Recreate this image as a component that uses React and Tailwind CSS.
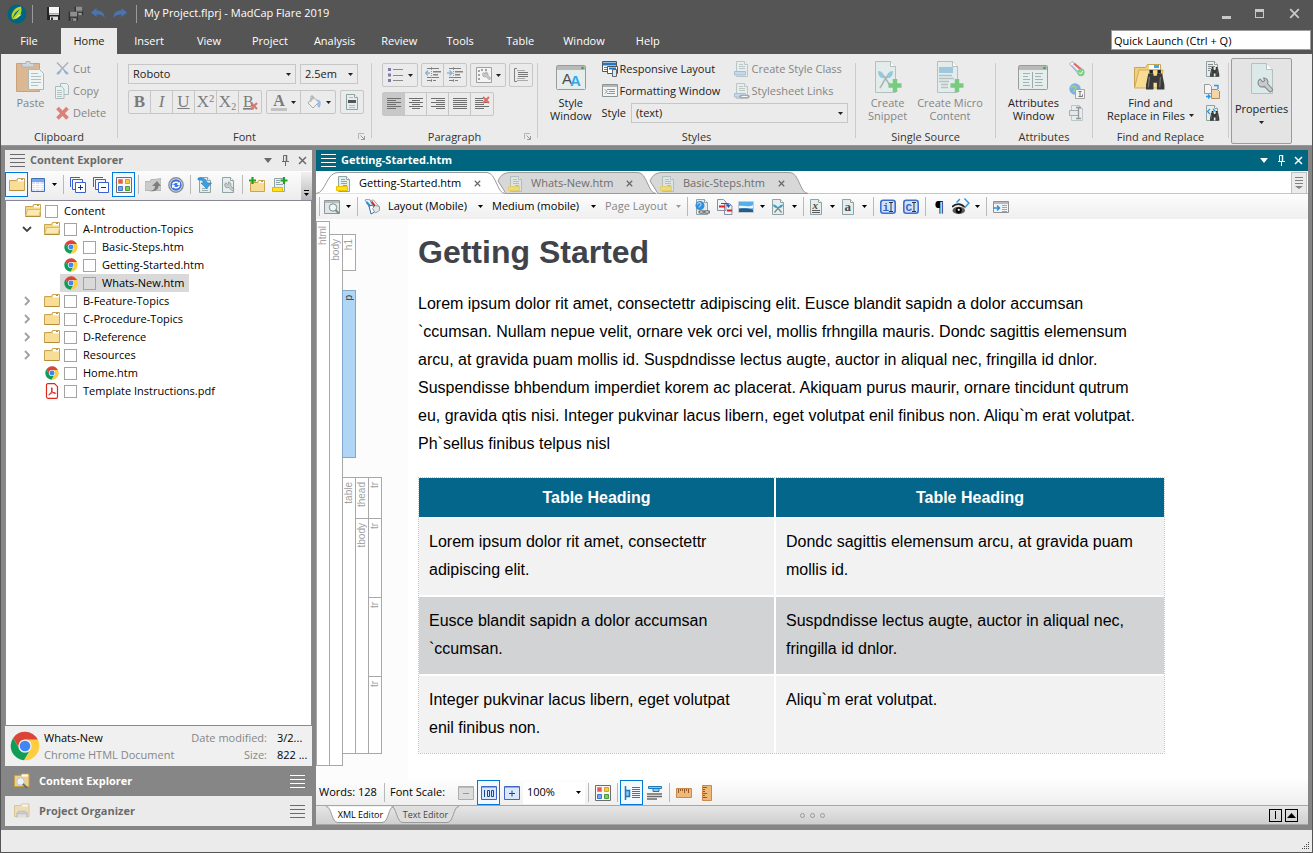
import clsx from 'clsx'

/* ---------- shared bits ---------- */

const Svg = ({ w = 16, h = 16, box = 16, faded, children }) => (
  <svg
    width={w}
    height={h}
    viewBox={`0 0 ${box} ${(box * h) / w}`}
    className={clsx('shrink-0', faded && 'opacity-50')}
    aria-hidden="true"
  >
    {children}
  </svg>
)

const Caret = ({ className = 'text-black' }) => (
  <svg width="5" height="3" viewBox="0 0 5 3" className={clsx('shrink-0', className)} aria-hidden="true">
    <path d="M0 0h5L2.5 3z" fill="currentColor" />
  </svg>
)

const Lines = ({ className = 'text-[#6a6a6a]' }) => (
  <svg width="15" height="13" viewBox="0 0 15 13" className={clsx('shrink-0', className)} aria-hidden="true">
    <path d="M0 .5h15M0 4.5h15M0 8.5h15M0 12.5h15" stroke="currentColor" />
  </svg>
)

const Sep = () => (
  <span className="flex w-1.5 shrink-0 justify-center">
    <span className="h-[19px] w-px bg-[#b9b9b9]" />
  </span>
)

const ToolButton = ({ label, active, narrow, children }) => (
  <button
    aria-label={label}
    className={clsx(
      'flex h-[25px] shrink-0 items-center justify-center',
      narrow ? 'w-5' : 'w-[23px]',
      active && 'border border-[#0078d7] bg-[#f3f9fe]'
    )}
  >
    {children}
  </button>
)

const DropButton = ({ label, className }) => (
  <button aria-label={label} className="flex h-[25px] w-3 shrink-0 items-center justify-center">
    <Caret className={className} />
  </button>
)

/* ---------- icons ---------- */

const PageShape = ({ fill = '#e4eeee' }) => (
  <>
    <path d="M2.500.5h8l3 3v12h-11z" fill={fill} stroke="#8fa3a6" />
    <path d="M10.500.5v3h3" fill="#fff" stroke="#8fa3a6" />
  </>
)

const Folder = ({ open }) => (
  <Svg>
    <path d="M.5 3.500h7l1-2h7v12H.5z" fill="#f4d88a" stroke="#c9a452" />
    <path d="M9 2h6v2.500H9z" fill="#fff" />
    <path d="M12 2h2v1h-2z" fill="#38b0e8" />
    {open ? (
      <path d="M2.500 6.500h13.200l-1.700 6.500H.8z" fill="#fbe9b4" stroke="#d9bb73" />
    ) : (
      <path d="M1 5h14v8H1z" fill="#f8dd97" />
    )}
    <path d="M.5 13.500h14.500" stroke="#b58d3a" />
  </Svg>
)

const Chrome = ({ size = 14 }) => (
  <Svg w={size} h={size} box={48}>
    <path d="M24 14h20.700A23 23 0 0 0 5 11.100L15.300 29A10 10 0 0 1 24 14z" fill="#db4437" />
    <path d="M32.700 29L22.300 46.900A23 23 0 0 0 44.700 14H24a10 10 0 0 1 8.700 15z" fill="#ffcd40" />
    <path d="M15.300 29L5 11.100a23 23 0 0 0 17.300 35.800L32.700 29a10 10 0 0 1-17.400 0z" fill="#0f9d58" />
    <circle cx="24" cy="24" r="10.500" fill="#f1f1f1" />
    <circle cx="24" cy="24" r="8.500" fill="#4285f4" />
  </Svg>
)

const Pdf = () => (
  <Svg>
    <path d="M4 .7h6.500l3 3V14a1.300 1.300 0 0 1-1.300 1.300H4A1.500 1.500 0 0 1 2.500 14V2A1.300 1.300 0 0 1 4 .7z" fill="#fff" stroke="#e0261b" strokeWidth="1.200" />
    <path d="M4.800 12.200c-.5-1 3-2.800 5.500-2.700 2 .2 1.500 1.500.2 1C8.500 9.800 7 7 7.500 5c.8-1 1 1 .2 3-.7 2-2 4.200-2.900 4.200z" fill="none" stroke="#e0261b" />
  </Svg>
)

const HtmlDoc = ({ faded }) => (
  <Svg faded={faded}>
    <PageShape />
    <path d="M5 3.500h4M5 5.500h6M5 7.500h6M7 9.500h4" stroke="#93a4a6" />
    <path d="M.5 10.500h11v4H.5z" fill="#ffe11c" stroke="#ecc500" />
  </Svg>
)

const Swatches = () => (
  <Svg>
    <path d="M.5.5h15v15H.5z" fill="#f7f7f7" stroke="#6d6d6d" />
    <path d="M2.500 2.500h4v4h-4z" fill="#e9574f" stroke="#e98a6a" />
    <path d="M9.500 2.500h4v4h-4z" fill="#ffc83c" stroke="#dd9f1f" />
    <path d="M2.500 9.500h4v4h-4z" fill="#6fa9ef" stroke="#3c78c7" />
    <path d="M9.500 9.500h4v4h-4z" fill="#7ac96b" stroke="#4b9b3d" />
  </Svg>
)

const GridView = () => (
  <Svg>
    <path d="M1.500 1.500h13v13h-13z" fill="#d3e2fa" stroke="#3f6fc0" />
    <path d="M2 2h12v3H2z" fill="#7ea6e6" />
    <path d="M2 7.500h12M2 9.500h12M2 11.500h12M5.500 5v9M10 5v9" stroke="#fff" />
  </Svg>
)

const Stack = ({ plus }) => (
  <Svg>
    <path d="M10 .5H.5V10M12.500 5V2.500h-10v10H5" fill="none" stroke="#3a5fd0" />
    <path d="M5.500 5.500h10v10h-10z" fill="#fff" stroke="#3a5fd0" />
    <path d={plus ? 'M8 10.500h5M10.500 8v5' : 'M8 10.500h5'} stroke="#1c2f7a" />
  </Svg>
)

const ExportIcon = () => (
  <Svg>
    <path d="M0 4.500h5l1-2h4l6-1v12H0z" fill="#cbcbcb" stroke="#b5b5b5" />
    <path d="M4 14c4 0 6-2 6-5H7l5-5 4 5h-2.500c0 4-4 6-9.500 5z" fill="#7d7d7d" />
  </Svg>
)

const Sync = () => (
  <Svg>
    <circle cx="8" cy="8" r="7.200" fill="#dfe4ec" stroke="#8a8f9a" strokeWidth="1.400" />
    <circle cx="8" cy="8" r="5.700" fill="#3f74dc" />
    <path d="M3.800 7.500C4.500 4.300 9 3.500 11 5.700l1-1V8H8.700L10 6.700C8.300 5.300 6.200 6 5.600 7.500zM12.200 8.500C11.500 11.700 7 12.500 5 10.300l-1 1V8h3.300L6 9.300c1.700 1.400 3.800.7 4.400-.8z" fill="#fff" />
  </Svg>
)

const PageArrow = () => (
  <Svg>
    <PageShape />
    <path d="M5 11.500h6M5 13.500h6" stroke="#9fb0b2" />
    <path d="M1 1c6-.5 9 1.500 9 5h4.500L9.500 11.500 4 6h2.500C6.500 3.500 4 2.500 1 3z" fill="#3ba0e2" stroke="#2277b8" strokeWidth=".6" />
  </Svg>
)

const Wrench = ({ x = 0, y = 0, s = 1 }) => (
  <g transform={`translate(${x} ${y}) scale(${s})`}>
    <path
      d="M1 4.500A3.500 3.500 0 0 1 3 1l2 2.500L7 2.500 6 0a3.500 3.500 0 0 1 3.500 5L14 10a2 2 0 0 1-2.500 2.500l-5-5A3.500 3.500 0 0 1 1 4.500z"
      fill="#c9cccc"
      stroke="#858b8b"
    />
  </g>
)

const PageWrench = () => (
  <Svg>
    <PageShape />
    <Wrench x={4} y={5} s={0.7} />
  </Svg>
)

const AddFolder = () => (
  <Svg>
    <path d="M1.500 5.500h7l1-2h6v11h-14z" fill="#f8dc94" stroke="#c9a452" />
    <path d="M10 4h5v2h-5z" fill="#fff" />
    <path d="M12 4h2v1h-2z" fill="#38b0e8" />
    <path d="M3.500 0v7M0 3.500h7" stroke="#23a127" strokeWidth="2.200" />
  </Svg>
)

const AddPage = () => (
  <Svg>
    <path d="M2.500 1.500h10v13h-10z" fill="#e9f1f1" stroke="#8fa3a6" />
    <path d="M4 3.500h4M4 5.500h4M4 7.500h7" stroke="#93a4a6" />
    <path d="M.5 10.500h10v4H.5z" fill="#ffe11c" stroke="#e2b600" />
    <path d="M12 0v7M8.500 3.500h7" stroke="#23a127" strokeWidth="2.200" />
  </Svg>
)

const Preview = () => (
  <Svg>
    <path d="M.5 1.500h15v13H.5z" fill="#dfe6e6" stroke="#8c9696" />
    <path d="M1 2h14v2H1z" fill="#b4bcbc" />
    <circle cx="9" cy="8.500" r="3.700" fill="#eef6fa" stroke="#7f8b8b" />
    <path d="M11.500 11l3.500 3.500" stroke="#7f8b8b" strokeWidth="2" />
  </Svg>
)

const Tags = () => (
  <Svg>
    <path d="M1 1l4-1 5 6-4 3z" fill="#e7f2fb" stroke="#8f9aa5" />
    <path d="M6 1.500l3.500-.5 5 6-4 3z" fill="#f6f6f6" stroke="#a0a0a0" />
    <path d="M2.500 3l4 4.500" stroke="#2f8fdd" strokeWidth="2" />
    <path d="M7.500 2.500L11 7" stroke="#d62a2a" strokeWidth="2" />
    <path d="M5 7l2 8 3.500-2L9 6z" fill="#fff" stroke="#2b6bb0" />
    <path d="M8.500 9.500l3-3 4 1v4l-4 2.500z" fill="#e2e6e6" stroke="#93a0a0" />
  </Svg>
)

const TagsCheck = () => (
  <Svg>
    <path d="M3 .5L.5 3l9 10 5-4z" fill="#f4f4f4" stroke="#b0b0b0" />
    <path d="M5 2.500l8 7" stroke="#e06a6a" strokeWidth="2.200" />
    <path d="M2.500 4.500l7 7" stroke="#9bbbe0" strokeWidth="1.500" />
    <circle cx="12" cy="11.500" r="3.700" fill="#7fcf86" />
    <path d="M10 11.500l1.500 1.500 2.500-3" fill="none" stroke="#fff" />
  </Svg>
)

const GlobeLink = () => (
  <Svg>
    <PageShape />
    <circle cx="6" cy="6.500" r="4.500" fill="#2f8fdd" />
    <path d="M3 5.500c2-3 4-2 4 0s-2 1-2 3" fill="none" stroke="#9fd0f2" strokeWidth="1.200" />
    <path d="M6 13h3.500M11 13h3.500" stroke="#777" strokeWidth="3.500" strokeLinecap="round" />
    <path d="M6.500 13h2.500M11.500 13H14" stroke="#fff" strokeWidth="1.200" strokeLinecap="round" />
    <path d="M8 13h4" stroke="#777" />
  </Svg>
)

const CrossRef = () => (
  <Svg>
    <path d="M.5.5h6l2.500 2.500v8.500H.5zM7.500 4.500h5l2.500 2.500v8.500H7.500z" fill="#eff4f4" stroke="#8d8da8" />
    <path d="M2 7.500h6M10 11.500h5" stroke="#d8232a" strokeWidth="2" />
    <path d="M4 4.500h5.500c1.500 0 2 1 2 2.500M9.500 5.500l2 2.500 2-2.500" fill="none" stroke="#2b55c4" strokeWidth="1.200" />
  </Svg>
)

const Picture = () => (
  <Svg>
    <path d="M.5 2.500h15v11H.5z" fill="#58aee8" stroke="#c4ccd2" />
    <path d="M1 7c5-1 9 2 14-1v3c-5 1-10 0-14 1z" fill="#e8f6ff" />
    <path d="M1 9.500c4 0 8-1 14 1.500v2H1z" fill="#235d8d" />
  </Svg>
)

const SnippetPage = () => (
  <Svg>
    <PageShape />
    <path d="M3 5.500c2 0 4 1 5 3.500-3 .5-5-1-5-3.500zM13 5.500c-2 0-4 1-5 3.500 3 .5 5-1 5-3.500z" fill="#3f9ec8" />
    <path d="M7 8l4.500 5.500M9 8l-4.500 5.500" stroke="#7a8a8f" strokeWidth="1.300" />
  </Svg>
)

const LetterPage = ({ letter }) => (
  <Svg>
    <PageShape />
    <text
      x="4.500"
      y={letter === 'x' ? 9.5 : 12}
      fontSize={letter === 'x' ? 11 : 13}
      fontWeight="700"
      fontStyle={letter === 'x' ? 'italic' : 'normal'}
      fontFamily="Liberation Serif, serif"
      fill="#4a4a4a"
    >
      {letter}
    </text>
    {letter === 'x' && <path d="M4 11.500h8M4 13.500h8" stroke="#555" />}
  </Svg>
)

const IndexMark = ({ letter }) => (
  <Svg>
    <rect x=".8" y="1.300" width="14.400" height="13" rx="2.500" fill="#d3e2fb" stroke="#3d6fd1" strokeWidth="1.600" />
    <text x="2.500" y="12" fontSize="11" fontWeight="700" fontFamily="Liberation Mono, monospace" fill="#3563c9">
      {letter}
    </text>
    <path d="M9 3.500h4M9 12.500h4M11 3.500v9" stroke="#333" />
  </Svg>
)

const EyeTag = () => (
  <Svg w={18} h={18}>
    <path d="M7 1L4 4M11 .5l4 4-4 4.500" fill="none" stroke="#2f96dc" strokeWidth="1.300" />
    <path d="M0 8c3-3.500 8-3.500 11 0" fill="none" stroke="#222" strokeWidth="1.500" />
    <ellipse cx="6" cy="11" rx="5.500" ry="3.200" fill="#5a5a5a" />
    <circle cx="6" cy="11" r="2.700" fill="#000" />
    <circle cx="6" cy="10.500" r="1" fill="#fff" />
  </Svg>
)

const InsertPane = () => (
  <Svg>
    <path d="M.5 2.500h15v11H.5z" fill="#f2f4f4" stroke="#938f93" />
    <path d="M1 3h14v2H1z" fill="#bcb6bc" />
    <path d="M9 6.500h5M9 8.500h5M9 10.500h5M9 12.500h5" stroke="#8bb0a8" />
    <path d="M0 9h6.500M4 6.500L6.500 9 4 11.500" fill="none" stroke="#2f8fdd" strokeWidth="1.500" />
  </Svg>
)

const PinIcon = () => (
  <svg width="7" height="11" viewBox="0 0 7 11" aria-hidden="true">
    <path d="M1.500 6V.5h3V6M0 6.500h7M3.500 7v4" fill="none" stroke="currentColor" />
    <path d="M4.500 0v6" stroke="currentColor" strokeWidth="1.500" />
  </svg>
)

const CloseIcon = ({ size = 9 }) => (
  <svg width={size} height={size} viewBox="0 0 9 9" aria-hidden="true">
    <path d="M1 1l7 7M8 1L1 8" stroke="currentColor" strokeWidth="1.500" />
  </svg>
)

const PaneControls = () => (
  <span className="flex items-center pr-px">
    <button aria-label="Pane menu" className="flex w-[18px] justify-center">
      <svg width="8" height="5" viewBox="0 0 8 5" aria-hidden="true">
        <path d="M0 0h8L4 5z" fill="currentColor" />
      </svg>
    </button>
    <button aria-label="Auto hide" className="flex w-[17px] justify-center">
      <PinIcon />
    </button>
    <button aria-label="Close pane" className="flex w-[17px] justify-center">
      <CloseIcon />
    </button>
  </span>
)

/* ---------- title bar and menu ---------- */

const Floppy = ({ dim }) => (
  <>
    <path d="M1 1h12l1 1v12H1z" fill={dim ? '#2f2f2f' : '#242424'} />
    <path d="M3 1h10v6.500H3z" fill={dim ? '#8f8f8f' : '#f6f6f6'} />
    <path d="M3 7.500h10v1.500H3z" fill={dim ? '#6c6c6c' : '#c9c9c9'} />
    <path d="M4 10.500h8V14H4z" fill={dim ? '#9a9a9a' : '#dcdcdc'} />
    <path d="M5 11.500h2V14H5z" fill="#333" />
  </>
)

const TitleBar = () => (
  <header className="flex h-[27px] items-center text-white">
    <span className="flex w-[31px] justify-center">
      <Svg w={20} h={20} box={20}>
        <circle cx="10" cy="10" r="9.500" fill="#00657e" />
        <path d="M5 15C3 9 8 3 14 2.500 16 9 12 15 6.500 15.500z" fill="#b8d433" />
        <path d="M3.500 17L13 5l-4 3-1 1-2 4z" fill="#00657e" />
        <path d="M8 15l7-4.500-3.500.5z" fill="#e4ef9f" />
      </Svg>
    </span>
    <span className="h-[18px] w-px bg-[#9a9a9a]" />
    <div className="flex w-[103px] items-center justify-center gap-1.5 pl-1">
      <button aria-label="Save">
        <Svg>
          <Floppy />
        </Svg>
      </button>
      <button aria-label="Save all">
        <Svg>
          <g transform="translate(6 0) scale(.65)"><Floppy dim /></g>
          <g transform="translate(0 5) scale(.7)"><Floppy dim /></g>
        </Svg>
      </button>
      <button aria-label="Undo">
        <Svg>
          <path d="M1 6.500L6.500 2v2.500c5 0 8 2 8 7.500-2-3-4-3.500-8-3.500V11z" fill="#4a74b0" />
        </Svg>
      </button>
      <button aria-label="Redo">
        <Svg>
          <path d="M15 6.500L9.500 2v2.500c-5 0-8 2-8 7.500 2-3 4-3.500 8-3.500V11z" fill="#4a74b0" />
        </Svg>
      </button>
    </div>
    <span className="h-[18px] w-px bg-[#9a9a9a]" />
    <h1 className="flex-1 pl-[7px] text-[11px]">My Project.flprj - MadCap Flare 2019</h1>
    <div className="flex items-center text-[#c8c8c8]">
      <button aria-label="Minimize" className="flex h-[10px] w-[33px] items-end justify-center">
        <span className="h-[3px] w-[9px] bg-[#c8c8c8]" />
      </button>
      <button aria-label="Maximize" className="flex w-[33px] justify-center">
        <span className="h-[9px] w-[9px] border border-t-[3px] border-[#c8c8c8]" />
      </button>
      <button aria-label="Close" className="flex w-9 justify-center">
        <CloseIcon size={11} />
      </button>
    </div>
  </header>
)

const menus = ['File', 'Home', 'Insert', 'View', 'Project', 'Analysis', 'Review', 'Tools', 'Table', 'Window', 'Help']

const MenuBar = () => (
  <nav className="flex h-[27px] items-end justify-between">
    <div className="flex gap-1">
      {menus.map((name) => (
        <button
          key={name}
          className={clsx(
            'h-[26px] min-w-14 px-[11px] pt-px text-[11px]',
            name === 'Home' ? 'bg-[#ebebeb] text-[#222]' : 'text-white'
          )}
        >
          {name}
        </button>
      ))}
    </div>
    <input
      aria-label="Quick Launch"
      placeholder="Quick Launch (Ctrl + Q)"
      className="mr-px mb-1 h-5 w-[200px] border border-[#9c9c9c] bg-white px-0.5 text-[11px] text-black placeholder:text-black"
    />
  </nav>
)

/* ---------- ribbon ---------- */

const Group = ({ title, launcher, className, children }) => (
  <section className={clsx('flex shrink-0 items-start', className)}>
    <div className="flex h-[91px] flex-1 flex-col">
      <div className="flex flex-1 pt-1">{children}</div>
      <div className="relative h-4 text-center text-[11px] leading-4 text-[#333]">
        {title}
        {launcher && (
          <button aria-label={`${title} options`} className="absolute top-1 right-1.5">
            <svg width="7" height="7" viewBox="0 0 7 7" aria-hidden="true">
              <path d="M.5 6V.5H6" fill="none" stroke="#b4b4b4" />
              <path d="M2.500 2.500l4 4M6.500 3v3.500H3" fill="none" stroke="#9a9a9a" />
            </svg>
          </button>
        )}
      </div>
    </div>
    <span className="mt-[9px] h-[75px] w-px bg-[#cbcbcb]" />
  </section>
)

const RibbonButton = ({ icon, disabled, children }) => (
  <button
    disabled={disabled}
    className={clsx('flex flex-col items-center text-[11px] leading-[13px]', disabled ? 'text-[#858585]' : 'text-[#222]')}
  >
    <span className="flex h-[38px] items-center">{icon}</span>
    {children}
  </button>
)

const RowButton = ({ icon, label, title, disabled }) => (
  <button
    disabled={disabled}
    aria-label={title}
    className={clsx(
      'flex h-[22px] items-center gap-0.5 text-[11px] whitespace-nowrap',
      disabled ? 'text-[#858585]' : 'text-[#222]'
    )}
  >
    {icon}
    {label}
  </button>
)

const Combo = ({ label, value, className }) => (
  <div className={clsx('flex h-5 items-center border border-[#c6c6c6] bg-[#ebebeb] pr-1', className)}>
    <select aria-label={label} className="min-w-0 flex-1 appearance-none bg-transparent pl-1 text-[11px] text-[#222]">
      <option>{value}</option>
    </select>
    <Caret className="text-[#222]" />
  </div>
)

const ButtonSet = ({ children }) => (
  <div className="flex h-6 divide-x divide-[#c6c6c6] rounded-[2px] border border-[#c6c6c6]">{children}</div>
)

const Cell = ({ label, wide, active, children }) => (
  <button
    aria-label={label}
    className={clsx(
      'flex items-center justify-center gap-1 font-[Liberation_Serif,serif] text-[17px] leading-5 text-[#7b7b7b]',
      wide ? 'w-[34px]' : 'w-[22px]',
      active && 'bg-[#c8c8c8]'
    )}
  >
    {children}
  </button>
)

const alignPaths = {
  Left: 'M1 2.500h14M1 4.500h9M1 6.500h14M1 8.500h9M1 10.500h14M1 12.500h9',
  Center: 'M1 2.500h14M4 4.500h8M1 6.500h14M4 8.500h8M1 10.500h14M4 12.500h8',
  Right: 'M1 2.500h14M6 4.500h9M1 6.500h14M6 8.500h9M1 10.500h14M6 12.500h9',
  Justify: 'M1 2.500h14M1 4.500h14M1 6.500h14M1 8.500h14M1 10.500h14M1 12.500h14',
  Clear: 'M1 2.500h8M1 4.500h8M1 6.500h14M1 8.500h9M1 10.500h14M1 12.500h9',
}

const Outdent = ({ flip }) => (
  <Svg>
    <path d="M2 1.500h12M8 4.500h8M8 7.500h5M2 10.500h12M2 13.500h5M8 13.500h3" stroke="#7f7f7f" />
    <path d="M8 5h8M8 8h5" stroke="#8a8a8a" />
    <path d="M6.500 0v16" stroke="#9a9a9a" strokeDasharray="1 1" />
    <path
      d={flip ? 'M0 6h4M2.500 3.500L5 6 2.500 8.500' : 'M5 6H1M3 3.500L.5 6 3 8.500'}
      fill="none"
      stroke="#8db8d8"
      strokeWidth="1.500"
    />
  </Svg>
)

const Binoculars = ({ x = 0, y = 0, s = 1 }) => (
  <g transform={`translate(${x} ${y}) scale(${s})`}>
    <path d="M2 3h4.500v2h3V3H14l2 10v4H9.500v-6h-3v6H0v-4z" fill="#3a3a3a" />
    <path d="M3 0h3v3H3zM10 0h3v3h-3z" fill="#222" />
    <path d="M3 6l-1 9M12.500 6l-.5 9" stroke="#777" />
  </g>
)

const WindowIcon = ({ children }) => (
  <Svg w={30} h={25} box={30}>
    <rect x=".5" y=".5" width="29" height="24" rx="1" fill="#e6eded" stroke="#9b9b9b" />
    <path d="M1 1h28v4H1z" fill="#b9b9b9" />
    <circle cx="26.500" cy="3" r="1.300" fill="#39a839" />
    {children}
  </Svg>
)

const BigPage = ({ children }) => (
  <Svg w={28} h={32} box={28}>
    <path d="M1.500.5h15l5 5v26h-20z" fill="#e1eceb" stroke="#b4bfbf" />
    <path d="M16.500.5v5h5" fill="#fff" stroke="#b4bfbf" />
    {children}
  </Svg>
)

const GreenPlus = () => <path d="M21 18v13M14.500 24.500h13" stroke="#79cb80" strokeWidth="4.500" />

const BlueSheet = ({ link }) => (
  <Svg faded>
    <PageShape />
    <path d="M5 3.500h4M5 5.500h6M5 7.500h6" stroke="#93a4a6" />
    <path d="M.5 10.500h11v3.500H.5z" fill="#9ec9ee" stroke="#5d94c6" />
    {link && <path d="M7 13.500h2.500M12 13.500h2" stroke="#666" strokeWidth="3.500" strokeLinecap="round" />}
    {link && <path d="M7.500 13.500h6" stroke="#fff" />}
  </Svg>
)

const Ribbon = () => (
  <div className="flex overflow-hidden bg-[#ebebeb]">
    <Group title="Clipboard" className="w-[117px]">
      <div className="flex gap-2.5 pl-[15px]">
        <RibbonButton
          disabled
          icon={
            <Svg w={29} h={32} box={29}>
              <path d="M.5 2.500h23v28H.5z" fill="#dcb892" stroke="#c9a27c" />
              <path d="M6 2.500h4V.5h4v2h4V6H6z" fill="#d4d7d9" stroke="#aeb2b4" />
              <path d="M12.500 8.500h11l4 4v16h-15z" fill="#eef4f4" stroke="#aab8b8" />
              <path d="M15 12.500h7M15 15.500h10M15 18.500h10M15 21.500h10M15 24.500h7" stroke="#b3bfbf" />
            </Svg>
          }
        >
          Paste
        </RibbonButton>
        <div className="w-14">
          <RowButton
            disabled
            label="Cut"
            icon={
              <Svg>
                <path d="M2 1.500l9 9.500M13 1.500L4 11" stroke="#a9b3b8" strokeWidth="1.500" />
                <path d="M1.500 13c0-2 2-3 5-3.500-1 3-3 5-5 3.500zM13.500 13c0-2-2-3-5-3.500 1 3 3 5 5 3.500z" fill="#8db4df" />
              </Svg>
            }
          />
          <RowButton
            disabled
            label="Copy"
            icon={
              <Svg>
                <path d="M5.500.5h6l2 2v9h-8z" fill="#eaf1f1" stroke="#a9bcbc" />
                <path d="M.5 3.500h6l2.500 2.500v9.500H.5z" fill="#eaf1f1" stroke="#a9bcbc" />
                <path d="M2 7.500h5M2 9.500h5M2 11.500h5M2 13.500h5" stroke="#b3c3c3" />
              </Svg>
            }
          />
          <RowButton
            disabled
            label="Delete"
            icon={
              <Svg>
                <path d="M2.500 3l10 10.500M12.500 3l-10 10.500" stroke="#dd8078" strokeWidth="3.700" />
              </Svg>
            }
          />
        </div>
      </div>
    </Group>

    <Group title="Font" launcher className="w-[254px]">
      <div className="flex flex-col gap-1.5 pt-1.5 pl-2.5">
        <div className="flex gap-1">
          <Combo label="Font family" value="Roboto" className="w-[168px]" />
          <Combo label="Font size" value="2.5em" className="w-[58px]" />
        </div>
        <div className="flex gap-1">
          <ButtonSet>
            <Cell label="Bold"><b>B</b></Cell>
            <Cell label="Italic"><i>I</i></Cell>
            <Cell label="Underline"><u>U</u></Cell>
            <Cell label="Superscript"><span>X<sup className="text-[10px]">2</sup></span></Cell>
            <Cell label="Subscript"><span>X<sub className="text-[10px]">2</sub></span></Cell>
            <Cell label="Clear formatting">
              <Svg>
                <text x="1" y="13" fontSize="16" textDecoration="underline" fill="#7b7b7b">B</text>
                <path d="M9 9l6 6M15 9l-6 6" stroke="#d9766d" strokeWidth="2" />
              </Svg>
            </Cell>
          </ButtonSet>
          <ButtonSet>
            <Cell label="Font color" wide>
              <span className="border-b-[3px] border-[#c2c2c2] px-0.5 text-base leading-[14px] font-bold">A</span>
              <Caret className="text-[#222]" />
            </Cell>
            <Cell label="Fill color" wide>
              <Svg>
                <path d="M7 3l6 5-6 6-5-5z" fill="#f0f0f0" stroke="#a9a9a9" />
                <path d="M5 8V2h2v4" fill="none" stroke="#a9a9a9" />
                <path d="M10 6c5-1 6 3 3.500 8-2-1-3-3-1.500-6z" fill="#9dbde0" />
              </Svg>
              <Caret className="text-[#222]" />
            </Cell>
          </ButtonSet>
          <ButtonSet>
            <Cell label="Block format">
              <Svg>
                <PageShape />
                <path d="M5 3.500h4M5 11.500h6M5 13.500h6" stroke="#b4bcbc" />
                <path d="M4 7.500h8" stroke="#555" strokeWidth="3" />
              </Svg>
            </Cell>
          </ButtonSet>
        </div>
      </div>
    </Group>

    <Group title="Paragraph" launcher className="w-[166px]">
      <div className="flex flex-col gap-[5px] pt-[5px] pl-2.5">
        <div className="flex gap-[3px]">
          <ButtonSet>
            <Cell label="List" wide>
              <Svg>
                <path d="M0 2.500h3M0 8h3M0 13.500h3" stroke="#8079ab" strokeWidth="3" />
                <path d="M5 2.500h10M5 8.500h10M5 13.500h10" stroke="#8a8a8a" />
              </Svg>
              <Caret className="text-[#222]" />
            </Cell>
          </ButtonSet>
          <ButtonSet>
            <Cell label="Outdent"><Outdent /></Cell>
            <Cell label="Indent"><Outdent flip /></Cell>
          </ButtonSet>
          <ButtonSet>
            <Cell label="Paragraph options" wide>
              <Svg>
                <path d="M.5.5h15v15H.5z" fill="#f4f4f4" stroke="#9f9f9f" />
                <path d="M3 3v11M5 3h8" stroke="#888" strokeWidth="1.500" strokeDasharray="2 2" />
                <Wrench x={6} y={5} s={0.6} />
              </Svg>
              <Caret className="text-[#222]" />
            </Cell>
          </ButtonSet>
          <ButtonSet>
            <Cell label="Spacing">
              <Svg>
                <path d="M4 1.500H1.500v13H4" fill="none" stroke="#808080" />
                <path d="M4 3.500h8M4 11.500h8M4 13.500h11" stroke="#aaa" />
                <path d="M5 5.500h10M5 7.500h10M5 9.500h10" stroke="#777" />
              </Svg>
            </Cell>
          </ButtonSet>
        </div>
        <div className="flex">
          <ButtonSet>
            {Object.entries(alignPaths).map(([name, d]) => (
              <Cell key={name} label={`Align ${name}`} active={name === 'Left'}>
                <Svg>
                  <path d={d} stroke="#6f6f6f" />
                  {name === 'Clear' && <path d="M9 1l6 6M15 1L9 7" stroke="#dd6d65" strokeWidth="2" />}
                </Svg>
              </Cell>
            ))}
          </ButtonSet>
        </div>
      </div>
    </Group>

    <Group title="Styles" className="w-[318px]">
      <div className="flex gap-2.5 pl-3">
        <RibbonButton
          icon={
            <WindowIcon>
              <text x="6" y="19" fontSize="15" fontFamily="Liberation Sans, sans-serif" fill="#4c4c4c">A</text>
              <text x="14" y="21" fontSize="15" fontWeight="700" fontFamily="Liberation Sans, sans-serif" fill="#33a9ea">A</text>
            </WindowIcon>
          }
        >
          <span>Style</span>
          <span>Window</span>
        </RibbonButton>
        <div>
          <div className="flex">
            <div className="w-[132px]">
              <RowButton
                label="Responsive Layout"
                icon={
                  <Svg>
                    <path d="M.5.5h14v10H.5z" fill="#fff" stroke="#555" />
                    <path d="M1 3h13" stroke="#1f78c8" strokeWidth="3" />
                    <path d="M2 6.500h3M2 8.500h3" stroke="#777" />
                    <path d="M5.500 5.500h10v7h-10z" fill="#fff" stroke="#555" />
                    <path d="M7 7.500h7" stroke="#1f78c8" strokeWidth="2" />
                    <path d="M10.500 8.500h4v7h-4z" fill="#d6e9f8" stroke="#666" />
                  </Svg>
                }
              />
              <RowButton
                label="Formatting Window"
                icon={
                  <Svg>
                    <path d="M.5 1.500h15v12H.5z" fill="#f2f5f5" stroke="#8d9696" />
                    <path d="M1 2h14v2H1z" fill="#b4b4b4" />
                    <path d="M5 6.500h8M7 8.500h6M5 10.500h8" stroke="#7da39f" />
                    <path d="M3 6.500l2 2-2 2" fill="none" stroke="#777" />
                  </Svg>
                }
              />
            </div>
            <div>
              <RowButton disabled label="Create Style Class" icon={<BlueSheet />} />
              <RowButton disabled label="Stylesheet Links" icon={<BlueSheet link />} />
            </div>
          </div>
          <div className="flex items-center gap-[5px] pt-px text-[11px] text-[#222]">
            <span>Style</span>
            <Combo label="Style" value="(text)" className="w-[217px]" />
          </div>
        </div>
      </div>
    </Group>

    <Group title="Single Source" className="w-[140px]">
      <div className="flex gap-2.5 pl-3">
        <RibbonButton
          disabled
          icon={
            <BigPage>
              <path d="M4 10c4 0 6 3 7 7-4 1-7-2-7-7zM19 10c-4 0-6 3-7 7 4 1 7-2 7-7z" fill="#94c9dd" />
              <path d="M10 15l7 11M13 15L6 27" stroke="#a9b5b8" strokeWidth="1.500" />
              <GreenPlus />
            </BigPage>
          }
        >
          <span>Create</span>
          <span>Snippet</span>
        </RibbonButton>
        <RibbonButton
          disabled
          icon={
            <BigPage>
              <path d="M3 6h14v6H3z" fill="#9fc8df" />
              <path d="M3 14.500h13M3 17.500h15M3 20.500h10M5 23.500h7M5 26.500h7" stroke="#b7c1c1" strokeWidth="1.500" />
              <GreenPlus />
            </BigPage>
          }
        >
          <span>Create Micro</span>
          <span>Content</span>
        </RibbonButton>
      </div>
    </Group>

    <Group title="Attributes" className="w-[97px]">
      <div className="flex gap-2.5 pl-3">
        <RibbonButton
          icon={
            <WindowIcon>
              <path d="M14.500 7v16" stroke="#9aa" />
              <path
                d="M5 8.500h7M5 11.500h5M5 14.500h7M5 17.500h6M5 20.500h7M17 8.500h8M17 11.500h6M17 14.500h8M17 17.500h7M17 20.500h8"
                stroke="#9fb5b2"
              />
            </WindowIcon>
          }
        >
          <span>Attributes</span>
          <span>Window</span>
        </RibbonButton>
        <div>
          <RowButton title="Apply conditions" icon={<TagsCheck />} />
          <RowButton
            title="Language"
            icon={
              <Svg>
                <circle cx="6" cy="6" r="5.700" fill="#7fb1dc" />
                <path d="M2 5c2-3 5-2 5 0s-2 1-2 4" fill="none" stroke="#9bd08f" strokeWidth="2" />
                <path d="M6.500 6.500h9v9h-9z" fill="#f4f4f4" stroke="#a5a5a5" />
                <path d="M9.500 8.500h3M11 8.500v5M9.500 13.500h4v-2" fill="none" stroke="#777" />
              </Svg>
            }
          />
          <RowButton
            title="Name"
            icon={
              <Svg faded>
                <PageShape />
                <path d="M.5 5.500h9v5h-9z" fill="#dfe7ec" stroke="#5d6f7c" />
                <path d="M7 2.500h5M7 13.500h5M9.500 2.500v11" stroke="#444" strokeWidth="1.300" />
              </Svg>
            }
          />
        </div>
      </div>
    </Group>

    <Group title="Find and Replace" className="w-[136px]">
      <div className="flex gap-2.5 pl-3.5">
        <RibbonButton
          icon={
            <Svg w={32} h={29} box={32}>
              <path d="M.5 4.500h11l2-3h13v23H.5z" fill="#f2cf7c" stroke="#c9a452" />
              <path d="M15 2h11v4H15z" fill="#fff" />
              <path d="M20 2h5v3h-5z" fill="#38b0e8" />
              <path d="M5 7h24l-3 18H.5z" fill="#f9dc94" stroke="#cfab5c" />
              <Binoculars x={12} y={7} s={1.15} />
            </Svg>
          }
        >
          <span>Find and</span>
          <span className="flex items-center gap-1 whitespace-nowrap">
            Replace in Files <Caret className="text-[#222]" />
          </span>
        </RibbonButton>
        <div>
          <RowButton
            title="Find text"
            icon={
              <Svg>
                <PageShape />
                <path d="M4 3.500h5M4 5.500h7M4 7.500h3M4 9.500h2" stroke="#888" />
                <Binoculars x={6} y={6} s={0.58} />
              </Svg>
            }
          />
          <RowButton
            title="Replace text"
            icon={
              <Svg>
                <path d="M.5 1.500h5l2 2v7h-7z" fill="#f4f4f4" stroke="#999" />
                <path d="M7.500 6.500h6l2 2v7h-8z" fill="#f2d5a8" stroke="#b08d58" />
                <path d="M10 2.500h4V6M2 13.500h4M4 11.500l2 2-2 2" fill="none" stroke="#2f96dc" strokeWidth="1.300" />
              </Svg>
            }
          />
          <RowButton
            title="Find elements"
            icon={
              <Svg>
                <PageShape />
                <path d="M6 4L3.500 6.500 6 9M9 4l2.500 2.500" fill="none" stroke="#2f96dc" strokeWidth="1.300" />
                <Binoculars x={6} y={6} s={0.58} />
              </Svg>
            }
          />
        </div>
      </div>
    </Group>

    <button className="mx-0.5 mt-1 flex h-[86px] w-[61px] shrink-0 flex-col items-center rounded-[2px] border border-[#9b9b9b] bg-[#e4e4e4] pt-1 text-[11px] text-[#222]">
      <Svg w={24} h={32} box={24}>
        <path d="M1.500.5h15l6 6v24h-21z" fill="#dce9e9" stroke="#b3c0c0" />
        <path d="M16.500.5v6h6" fill="#fff" stroke="#b3c0c0" />
        <Wrench x={7} y={15} s={1.1} />
      </Svg>
      <span className="mt-1.5 mb-1 leading-4">Properties</span>
      <Caret className="text-[#222]" />
    </button>
  </div>
)

/* ---------- content explorer ---------- */

const files = [
  { name: 'Content', level: 0, icon: 'open' },
  { name: 'A-Introduction-Topics', level: 1, icon: 'open', expanded: true },
  { name: 'Basic-Steps.htm', level: 2, icon: 'htm' },
  { name: 'Getting-Started.htm', level: 2, icon: 'htm' },
  { name: 'Whats-New.htm', level: 2, icon: 'htm', selected: true },
  { name: 'B-Feature-Topics', level: 1, icon: 'folder', expanded: false },
  { name: 'C-Procedure-Topics', level: 1, icon: 'folder', expanded: false },
  { name: 'D-Reference', level: 1, icon: 'folder', expanded: false },
  { name: 'Resources', level: 1, icon: 'folder', expanded: false },
  { name: 'Home.htm', level: 1, icon: 'htm' },
  { name: 'Template Instructions.pdf', level: 1, icon: 'pdf' },
]

const indents = ['w-4', 'w-[35px]', 'w-[54px]']

const FileIcon = ({ type }) => {
  if (type === 'htm') return <Chrome />
  if (type === 'pdf') return <Pdf />
  return <Folder open={type === 'open'} />
}

const TreeRow = ({ file }) => (
  <li className="flex h-[18px] items-center">
    <span className={clsx('flex shrink-0', indents[file.level])}>
      {file.expanded !== undefined && (
        <button aria-label={`Toggle ${file.name}`} className="ml-4">
          <svg width="10" height="10" viewBox="0 0 10 10" fill="none" strokeWidth="1.800" aria-hidden="true">
            {file.expanded ? <path d="M1 3l4 4 4-4" stroke="#444" /> : <path d="M3 1l4 4-4 4" stroke="#a0a0a0" />}
          </svg>
        </button>
      )}
    </span>
    <label
      className={clsx('flex h-[18px] items-center pr-[5px] pl-[3px] whitespace-nowrap', file.selected && 'bg-[#d9d9d9]')}
    >
      <span className="flex w-4 justify-center">
        <FileIcon type={file.icon} />
      </span>
      <input
        type="checkbox"
        className={clsx(
          'mr-1.5 ml-1 h-[13px] w-[13px] appearance-none border border-[#a3a3a3]',
          file.selected ? 'bg-[#d9d9d9]' : 'bg-white'
        )}
      />
      {file.name}
    </label>
  </li>
)

const PaneTab = ({ title, active }) => (
  <button
    className={clsx(
      'flex h-[30px] items-center pr-[7px] pl-[9px] font-bold',
      active ? 'bg-[#868686] text-white' : 'bg-[#ebebeb] text-[#6a6a6a]'
    )}
  >
    <Svg faded={!active}>
      <path d="M.5 2.500h6l1-1.500h7.500v12.500H.5z" fill="#f0cf86" stroke="#c99f4a" />
      <path d="M8 1.500h6v2H8z" fill="#fff" />
      {active ? (
        <>
          <circle cx="6.500" cy="8.500" r="3.700" fill="#e6f3fb" stroke="#b9c8d2" />
          <path d="M9 11l4 4" stroke="#6d6d6d" strokeWidth="2" />
        </>
      ) : (
        <path d="M3 14.500v-4h10v4M3 10.500l2-2h6l2 2" fill="#d5d5d5" stroke="#999" strokeWidth="1.500" />
      )}
    </Svg>
    <span className="flex-1 pl-[9px] text-left">{title}</span>
    <Lines className={active ? 'text-white' : 'text-[#6a6a6a]'} />
  </button>
)

const ContentExplorer = () => (
  <aside className="flex w-[307px] shrink-0 flex-col bg-white text-[11px]">
    <div className="flex h-[21px] items-center bg-[#ebebeb] pl-[5px] text-[#6a6a6a]">
      <Lines />
      <h2 className="flex-1 pl-[5px] font-bold">Content Explorer</h2>
      <PaneControls />
    </div>
    <div className="flex h-[29px] items-start bg-linear-to-b from-[#fcfcfc] to-[#ececec] pt-px">
      <ToolButton label="Show folders" active><Folder /></ToolButton>
      <ToolButton label="View" narrow><GridView /></ToolButton>
      <DropButton label="View options" />
      <span className="pt-[3px]"><Sep /></span>
      <ToolButton label="Expand all"><Stack plus /></ToolButton>
      <ToolButton label="Collapse all"><Stack /></ToolButton>
      <ToolButton label="Show pending" active><Swatches /></ToolButton>
      <span className="pt-[3px]"><Sep /></span>
      <ToolButton label="Export"><ExportIcon /></ToolButton>
      <ToolButton label="Synchronize"><Sync /></ToolButton>
      <span className="pt-[3px]"><Sep /></span>
      <ToolButton label="Open"><PageArrow /></ToolButton>
      <ToolButton label="Properties"><PageWrench /></ToolButton>
      <span className="pt-[3px]"><Sep /></span>
      <ToolButton label="New folder"><AddFolder /></ToolButton>
      <ToolButton label="New topic"><AddPage /></ToolButton>
      <button
        aria-label="More tools"
        className="ml-auto flex h-7 w-[11px] flex-col items-center justify-end gap-0.5 bg-linear-to-b from-[#f1f1f1] to-[#b9b9b9] pb-1"
      >
        <span className="h-px w-[5px] bg-black" />
        <Caret />
      </button>
    </div>
    <ul className="flex-1 border border-[#8a8796] bg-white pt-px text-black">
      {files.map((file) => (
        <TreeRow key={file.name} file={file} />
      ))}
    </ul>
    <div className="flex h-10 items-center bg-[#f0f0f0] pl-[5px] leading-[17px]">
      <Chrome size={30} />
      <div className="flex-1 pl-1 text-[#868686]">
        <p className="text-black">Whats-New</p>
        <p>Chrome HTML Document</p>
      </div>
      <dl className="grid grid-cols-[auto_31px] gap-x-2.5 pr-1 text-right text-[#868686]">
        <dt>Date modified:</dt>
        <dd className="text-left text-black">3/2...</dd>
        <dt>Size:</dt>
        <dd className="text-left whitespace-nowrap text-black">822 ...</dd>
      </dl>
    </div>
    <PaneTab title="Content Explorer" active />
    <PaneTab title="Project Organizer" />
  </aside>
)

/* ---------- editor ---------- */

const docTabs = [
  { name: 'Getting-Started.htm', active: true },
  { name: 'Whats-New.htm' },
  { name: 'Basic-Steps.htm' },
]

const DocTab = ({ tab }) => (
  <div className={clsx('relative h-[23px] shrink-0', tab.active ? 'z-10 w-[189px]' : '-ml-2 w-[160px]')}>
    <svg
      width={tab.active ? 189 : 160}
      height="23"
      className="absolute inset-0"
      fill={tab.active ? '#fff' : '#d8d8d8'}
      stroke="#9a9a9a"
      aria-hidden="true"
    >
      {tab.active ? (
        <path d="M0 22.500C10 22 10 1.500 22 1.500h149c9 0 10 21 18 21" />
      ) : (
        <path d="M9 22.500L1 10C4 3 8 1.500 14 1.500h127c9 0 10 21 18 21z" />
      )}
    </svg>
    <button
      className={clsx(
        'relative flex h-full items-center pt-0.5 text-[11px]',
        tab.active ? 'gap-[7px] pl-5 text-black' : 'gap-[7px] pl-[11px] text-[#6d6d6d]'
      )}
    >
      <HtmlDoc faded={!tab.active} />
      <span>{tab.name}</span>
      <span className="ml-1.5 text-[#666]"><CloseIcon size={7} /></span>
    </button>
  </div>
)

const EditorToolbar = () => (
  <div className="flex h-[25px] items-center bg-linear-to-b from-[#fdfdfd] to-[#efefef] text-[11px] whitespace-nowrap text-black">
    <Sep />
    <ToolButton label="Preview" narrow><Preview /></ToolButton>
    <DropButton label="Preview options" />
    <Sep />
    <ToolButton label="Conditions"><Tags /></ToolButton>
    <button className="ml-[5px] w-[86px] text-left">Layout (Mobile)</button>
    <DropButton label="Layout" />
    <button className="ml-1.5 w-[95px] text-left">Medium (mobile)</button>
    <DropButton label="Medium" />
    <button className="ml-1.5 w-[67px] text-left text-[#858585]">Page Layout</button>
    <DropButton label="Page layout" className="text-[#9a9a9a]" />
    <Sep />
    <ToolButton label="Insert hyperlink"><GlobeLink /></ToolButton>
    <ToolButton label="Insert cross-reference"><CrossRef /></ToolButton>
    <ToolButton label="Insert picture" narrow><Picture /></ToolButton>
    <DropButton label="Picture options" />
    <ToolButton label="Insert snippet" narrow><SnippetPage /></ToolButton>
    <DropButton label="Snippet options" />
    <Sep />
    <ToolButton label="Insert variable" narrow><LetterPage letter="x" /></ToolButton>
    <DropButton label="Variable options" />
    <ToolButton label="Insert glossary term" narrow><LetterPage letter="a" /></ToolButton>
    <DropButton label="Glossary options" />
    <Sep />
    <ToolButton label="Index entry"><IndexMark letter="i" /></ToolButton>
    <ToolButton label="Concept entry"><IndexMark letter="C" /></ToolButton>
    <Sep />
    <ToolButton label="Show markers"><span className="text-[15px]">¶</span></ToolButton>
    <ToolButton label="Show tags" narrow><EyeTag /></ToolButton>
    <DropButton label="Tag options" />
    <Sep />
    <ToolButton label="Insert pane"><InsertPane /></ToolButton>
  </div>
)

const Tag = ({ name, className }) => (
  <div
    className={clsx(
      '-mr-px flex w-[14px] shrink-0 justify-center border pt-1 font-[Liberation_Sans,sans-serif] text-[10px] leading-3',
      className
    )}
  >
    <span className="h-fit rotate-180 [writing-mode:vertical-rl]">{name}</span>
  </div>
)

const plainTag = 'border-[#a8a8a8] bg-white text-[#a0a0a0]'

const TagBars = () => (
  <div className="flex w-[92px] shrink-0 items-start bg-[#fcfcfc] pt-0.5">
    <Tag name="html" className={`h-[545px] ${plainTag}`} />
    <Tag name="body" className={`mt-[13px] h-[532px] ${plainTag}`} />
    <div className="mt-[13px]">
      <Tag name="h1" className={`h-[37px] ${plainTag}`} />
      <Tag name="p" className="mt-[19px] h-[168px] border-[#7fa8cc] bg-[#b1d6f5] text-[#333]" />
      <div className="mt-[19px] flex">
        <Tag name="table" className={`h-[277px] ${plainTag}`} />
        <div>
          <Tag name="thead" className={`h-[42px] ${plainTag}`} />
          <Tag name="tbody" className={`-mt-px h-[236px] ${plainTag}`} />
        </div>
        <div>
          <Tag name="tr" className={`h-[42px] ${plainTag}`} />
          <Tag name="tr" className={`-mt-px h-20 ${plainTag}`} />
          <Tag name="tr" className={`-mt-px h-20 ${plainTag}`} />
          <Tag name="tr" className={`-mt-px h-[78px] ${plainTag}`} />
        </div>
      </div>
    </div>
  </div>
)

const rows = [
  ['Lorem ipsum dolor rit amet, consectettr adipiscing elit.', 'Dondc sagittis elemensum arcu, at gravida puam mollis id.'],
  ['Eusce blandit sapidn a dolor accumsan `ccumsan.', 'Suspdndisse lectus augte, auctor in aliqual nec, fringilla id dnlor.'],
  ['Integer pukvinar lacus libern, eget volutpat enil finibus non.', 'Aliqu`m erat volutpat.'],
]

const Topic = () => (
  <article className="max-w-[757px] flex-1 pl-2.5 font-[Liberation_Sans,sans-serif] text-base leading-7 text-black">
    <h1 className="pt-[13px] text-[32px] leading-10 font-bold text-[#404349]">Getting Started</h1>
    <p className="pt-[18px] pr-2.5">
      Lorem ipsum dolor rit amet, consectettr adipiscing elit. Eusce blandit sapidn a dolor accumsan `ccumsan. Nullam
      nepue velit, ornare vek orci vel, mollis frhngilla mauris. Dondc sagittis elemensum arcu, at gravida puam mollis
      id. Suspdndisse lectus augte, auctor in aliqual nec, fringilla id dnlor. Suspendisse bhbendum imperdiet korem ac
      placerat. Akiquam purus maurir, ornare tincidunt qutrum eu, gravida qtis nisi. Integer pukvinar lacus libern, eget
      volutpat enil finibus non. Aliqu`m erat volutpat. Ph`sellus finibus telpus nisl
    </p>
    <table className="mt-[19px] w-full table-fixed border-separate border-spacing-0 border border-dotted border-[#c4c4c4]">
      <colgroup>
        <col className="w-[357px]" />
        <col />
      </colgroup>
      <thead>
        <tr className="h-[39px] bg-[#04668a] text-white">
          <th className="border-r-2 border-white leading-9">Table Heading</th>
          <th className="leading-9">Table Heading</th>
        </tr>
      </thead>
      <tbody>
        {rows.map(([a, b], i) => (
          <tr
            key={a}
            className={clsx(
              'align-top *:border-white *:pt-2.5 *:pr-5 *:pb-[11px] *:pl-2.5',
              i === 0 ? '*:border-t' : '*:border-t-2',
              i === 1 ? 'bg-[#d1d3d4]' : 'bg-[#f2f2f2]'
            )}
          >
            <td className="border-r-2">{a}</td>
            <td>{b}</td>
          </tr>
        ))}
      </tbody>
    </table>
  </article>
)

const ScaleIcon = ({ sign, faded }) => (
  <Svg>
    <path d="M.5 1.500h15v13H.5z" fill={faded ? '#dcdcdc' : '#dbe7fb'} stroke={faded ? '#adadad' : '#3f66c4'} />
    <path d="M1 2.500h14" stroke={faded ? '#bbb' : '#8eaae6'} />
    <path d={sign} fill="none" stroke={faded ? '#999' : '#154b8c'} />
  </Svg>
)

const StatusTools = () => (
  <div className="flex h-[25px] items-center bg-linear-to-b from-[#fdfdfd] to-[#efefef] text-[11px] whitespace-nowrap text-black">
    <span className="w-[65px] pl-[3px]">Words: 128</span>
    <Sep />
    <span className="w-[67px] pl-[3px]">Font Scale:</span>
    <ToolButton label="Decrease scale"><ScaleIcon sign="M5 8.500h6" faded /></ToolButton>
    <ToolButton label="Reset scale" active><ScaleIcon sign="M3.500 5v7M6.500 5.500h2v6h-2zM10.500 5.500h2v6h-2z" /></ToolButton>
    <ToolButton label="Increase scale"><ScaleIcon sign="M5 8.500h6M8 5.500v6" /></ToolButton>
    <div className="flex h-[22px] w-[62px] items-center bg-white pr-1">
      <select aria-label="Zoom" className="min-w-0 flex-1 appearance-none pl-1">
        <option>100%</option>
      </select>
      <Caret />
    </div>
    <Sep />
    <ToolButton label="Conditions"><Swatches /></ToolButton>
    <Sep />
    <ToolButton label="Show block bars" active>
      <Svg>
        <path d="M1.500 1v14M1.500 5.500h4v6h-4" fill="#8fc6ee" stroke="#1c78b8" strokeWidth="1.500" />
        <path d="M8 2.500h8M8 4.500h8M8 6.500h8M8 8.500h8M8 10.500h8M8 12.500h8" stroke="#6a6a6a" />
      </Svg>
    </ToolButton>
    <ToolButton label="Show span bars">
      <Svg>
        <path d="M1.500 1.500h13v2h-13zM6 3.500h6v3H6z" fill="#8fc6ee" stroke="#1c78b8" />
        <path d="M0 9h15M0 11.500h15M0 14h10" stroke="#6a6a6a" strokeWidth="1.500" />
      </Svg>
    </ToolButton>
    <Sep />
    <ToolButton label="Horizontal ruler">
      <Svg>
        <path d="M.5 3.500h15v9H.5z" fill="#f0b878" stroke="#c8894a" />
        <path d="M2.500 4v4M4.500 4v2M6.500 4v2M8.500 4v4M10.500 4v2M12.500 4v4" stroke="#8e5a28" />
      </Svg>
    </ToolButton>
    <ToolButton label="Vertical ruler">
      <Svg>
        <path d="M3.500.5h9v15h-9z" fill="#f0b878" stroke="#c8894a" />
        <path d="M4 2.500h4M4 4.500h2M4 6.500h2M4 8.500h4M4 10.500h2M4 12.500h4" stroke="#8e5a28" />
      </Svg>
    </ToolButton>
  </div>
)

const ViewTab = ({ name, active }) => (
  <button
    className={clsx('relative h-[18px] w-[69px] text-[9px]', active ? 'z-10 text-black' : '-ml-1 text-[#444]')}
  >
    <svg width="69" height="18" className="absolute inset-0" fill={active ? '#fff' : '#dedede'} stroke="#9a9a9a" aria-hidden="true">
      <path d="M0 .5c6 0 5 16 12 16h44c7 0 6-16 12-16" />
    </svg>
    <span className="relative">{name}</span>
  </button>
)

const Editor = () => (
  <main className="mb-px flex min-w-0 flex-1 flex-col bg-white">
    <div className="flex h-[21px] items-center bg-[#00657e] pl-[5px] text-[11px] text-white">
      <Lines className="text-white" />
      <h2 className="flex-1 pl-[5px] font-bold">Getting-Started.htm</h2>
      <PaneControls />
    </div>
    <div className="flex h-[23px] border-b border-[#c6c6c6]">
      {docTabs.map((tab) => (
        <DocTab key={tab.name} tab={tab} />
      ))}
      <button
        aria-label="Open documents"
        className="mt-px mr-px ml-auto flex h-[22px] w-4 flex-col items-center justify-center border border-[#c0c0c0] bg-[#ebebeb] text-[#808080]"
      >
        <svg width="8" height="12" viewBox="0 0 8 12" aria-hidden="true">
          <path d="M0 .5h8M0 3.500h8M0 6.500h8" stroke="currentColor" />
          <path d="M0 9h8l-4 3z" fill="currentColor" />
        </svg>
      </button>
    </div>
    <EditorToolbar />
    <div className="flex flex-1">
      <TagBars />
      <Topic />
    </div>
    <StatusTools />
    <div className="flex h-5 items-start justify-between border-y border-[#a6a6a6] bg-linear-to-b from-[#e6e6e6] to-[#cfcfcf]">
      <div className="flex flex-1 pl-2.5">
        <ViewTab name="XML Editor" active />
        <ViewTab name="Text Editor" />
      </div>
      <div className="flex gap-[5px] self-center">
        {[0, 1, 2].map((i) => (
          <span key={i} className="h-[5px] w-[5px] rounded-full border border-[#9a9a9a]" />
        ))}
      </div>
      <div className="flex flex-1 justify-end gap-[3px] self-center pr-2.5">
        <button aria-label="Split view" className="flex h-[13px] w-[13px] items-center justify-center border border-black">
          <span className="h-2 w-px bg-black" />
        </button>
        <button aria-label="Expand view" className="flex h-[13px] w-[13px] items-center justify-center border border-black">
          <svg width="9" height="5" viewBox="0 0 9 5" aria-hidden="true">
            <path d="M4.500 0L9 5H0z" />
          </svg>
        </button>
      </div>
    </div>
  </main>
)

const App = () => (
  <div className="flex min-h-screen flex-col border-x border-b border-[#555] bg-[#555] font-['Open_Sans',sans-serif]">
    <TitleBar />
    <MenuBar />
    <Ribbon />
    <div className="flex flex-1 gap-1 border-t border-[#979797] bg-[#868686] p-1">
      <ContentExplorer />
      <Editor />
    </div>
    <footer className="flex h-[22px] items-end justify-end bg-[#ebebeb] p-0.5">
      <svg width="8" height="8" viewBox="0 0 8 8" aria-hidden="true">
        <path
          d="M6 0h1v1H6zM4 2h1v1H4zM6 2h1v1H6zM2 4h1v1H2zM4 4h1v1H4zM6 4h1v1H6zM0 6h1v1H0zM2 6h1v1H2zM4 6h1v1H4zM6 6h1v1H6z"
          fill="#444"
        />
      </svg>
    </footer>
  </div>
)

export default App
